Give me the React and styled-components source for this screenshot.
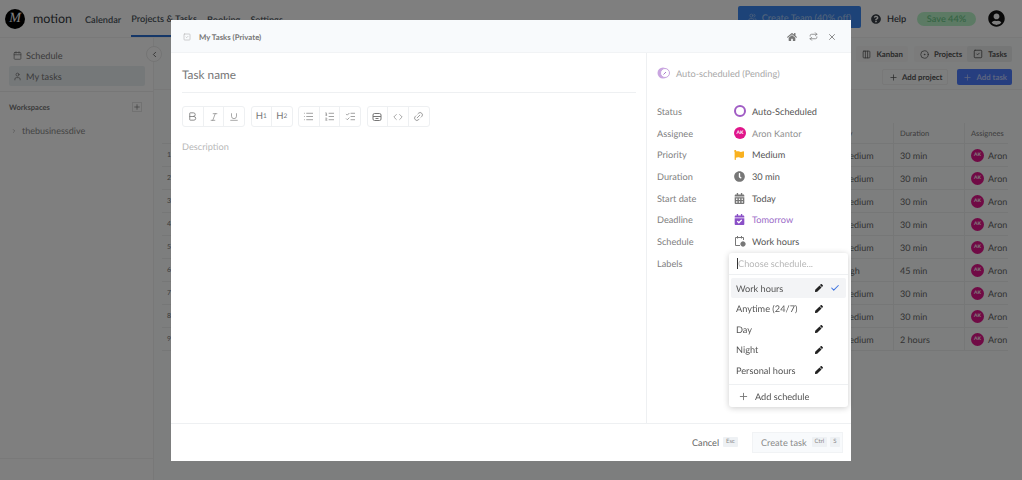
import React from 'react';
import styled, { createGlobalStyle } from 'styled-components';
import {
  Bold, Italic, Underline, List, ListOrdered, ListChecks, Code, Link2, Plus, X, Repeat, Check,
  Calendar, User, ChevronLeft, ChevronRight, Columns3, CircleDot, SquareCheck, Users,
} from 'lucide-react';
import { FaHome, FaPen, FaFlag, FaClock, FaQuestionCircle, FaUserCircle, FaCalendarAlt, FaCalendarCheck } from 'react-icons/fa';

const GlobalStyle = createGlobalStyle`
  html, body { margin: 0; padding: 0; height: 100%; background: #fff; overflow: hidden; }
  body {
    font-family: Lato, "Open Sans", "Liberation Sans", sans-serif;
    color: #444;
    text-rendering: geometricPrecision;
  }
  * { box-sizing: border-box; }
`;

/* page behind the dialog */
const Page = styled.div`
  width: 1022px;
  height: 480px;
  display: flex;
  flex-direction: column;
  background: #fff;
  overflow: hidden;
`;

const TopBar = styled.header`
  height: 38px;
  display: flex;
  align-items: center;
  padding: 0 17px 0 5px;
  border-bottom: 1px solid #f2f2f2;
  flex-shrink: 0;
`;

const Logo = styled.div`
  width: 20px;
  height: 20px;
  border-radius: 50%;
  background: #000;
  color: #fff;
  font: italic 14px/19px "Liberation Serif", serif;
  text-align: center;
`;

const Brand = styled.span`
  margin-left: 8px;
  font-size: 12.5px;
  color: #33383c;
  width: 52px;
`;

const Nav = styled.nav`
  display: flex;
  gap: 10px;
  font-size: 9.2px;
  font-weight: 600;
  color: #49525a;
  height: 100%;
`;

const NavItem = styled.span`
  display: flex;
  align-items: center;
  height: 100%;
  padding-top: 2px;
  border-bottom: ${p => (p.$active ? '2px solid #2a6fd0' : '0')};
`;

const TopRight = styled.div`
  margin-left: auto;
  display: flex;
  align-items: center;
`;

const TeamButton = styled.div`
  width: 123px;
  height: 22px;
  margin-top: -3px;
  border-radius: 2px;
  background: #3b86f0;
  color: #9fc4f5;
  font-size: 9.2px;
  font-weight: 600;
  display: flex;
  align-items: center;
  justify-content: center;
  gap: 5px;
`;

const HelpLink = styled.div`
  margin-left: 10px;
  width: 46px;
  display: flex;
  align-items: center;
  gap: 6px;
  font-size: 9.2px;
  font-weight: 600;
  color: #3a4148;
`;

const SavePill = styled.div`
  width: 59px;
  height: 14px;
  border-radius: 7px;
  background: #b8f5c8;
  color: #6fc88a;
  font-size: 9.2px;
  font-weight: 600;
  text-align: center;
  line-height: 14px;
`;

const Avatar = styled.div`
  margin-left: 12px;
  display: flex;
  color: #111;
`;

const Body = styled.div`
  flex: 1;
  display: flex;
  min-height: 0;
`;

const Sidebar = styled.aside`
  width: 154px;
  flex-shrink: 0;
  display: flex;
  flex-direction: column;
  border-right: 1px solid #f0f0f0;
`;

const SideNav = styled.div`
  padding: 7px 8px 6px 9px;
  border-bottom: 1px solid #eee;
  height: 54px;
`;

const SideItem = styled.div`
  height: 20px;
  margin-bottom: 1px;
  padding-left: 4px;
  display: flex;
  align-items: center;
  gap: 4px;
  font-size: 9.2px;
  color: #777;
  border-radius: 2px;
  background: ${p => (p.$active ? '#ebf0f3' : 'transparent')};
`;

const WorkspaceHead = styled.div`
  display: flex;
  justify-content: space-between;
  align-items: center;
  padding: 10px 11px 0 9px;
  font-size: 7.5px;
  font-weight: 700;
  color: #777;
`;

const AddBox = styled.span`
  width: 10px;
  height: 10px;
  border: 1px solid #e4e4e4;
  display: flex;
  align-items: center;
  justify-content: center;
`;

const WorkspaceRow = styled.div`
  margin-top: 13px;
  padding-left: 11px;
  display: flex;
  align-items: center;
  gap: 5px;
  font-size: 9px;
  color: #888;
`;

const SideFoot = styled.div`
  margin-top: auto;
  height: 22px;
  border-top: 1px solid #f2f2f2;
`;

const Main = styled.main`
  flex: 1;
  min-width: 0;
  position: relative;
  display: flex;
  flex-direction: column;
  background: #fbfdfd;
`;

const Collapse = styled.span`
  position: absolute;
  left: -8px;
  top: 8px;
  width: 16px;
  height: 16px;
  border-radius: 50%;
  background: #fff;
  border: 1px solid #e8e8e8;
  display: flex;
  align-items: center;
  justify-content: center;
`;

const MainHead = styled.div`
  height: 52px;
  padding: 8px 10px 0 10px;
  display: flex;
  flex-direction: column;
  border-bottom: 1px solid #f0f0f0;
  flex-shrink: 0;
`;

const HeadRow = styled.div`
  display: flex;
  align-items: center;
  justify-content: flex-end;
  height: 16px;
`;

const TabGroup = styled.div`
  display: flex;
  align-items: center;
  height: 16px;
  margin-left: 6px;
  background: #f6f7f7;
  border-radius: 2px;
`;

const ViewTab = styled.span`
  display: flex;
  align-items: center;
  gap: 5px;
  height: 16px;
  padding: 0 5px 0 6px;
  font-size: 7.8px;
  font-weight: 700;
  color: #555;
  border-radius: 2px;
  background: ${p => (p.$active ? '#eaecec' : 'transparent')};
`;

const ActionRow = styled(HeadRow)`
  margin-top: 7px;
  gap: 9px;
`;

const ActionButton = styled.span`
  height: 16px;
  padding: 0 5px 0 6px;
  display: flex;
  align-items: center;
  gap: 4px;
  border-radius: 2px;
  font-size: 7.8px;
  font-weight: 700;
  color: ${p => (p.$primary ? '#b9c9ff' : '#555')};
  background: ${p => (p.$primary ? '#4d7cff' : 'transparent')};
  border: ${p => (p.$primary ? '0' : '1px solid #f0f0f0')};
`;

const Table = styled.div`
  margin: 33px 14px 0 8px;
  display: flex;
  flex-direction: column;
`;

const TableRow = styled.div`
  display: grid;
  grid-template-columns: 1fr 68px 71px 44px;
  height: ${p => (p.$head ? 21 : 23)}px;
  align-items: center;
  border-bottom: 1px solid #eceeee;
  font-size: ${p => (p.$head ? 7.5 : 9)}px;
  color: ${p => (p.$head ? '#777' : '#666')};
`;

const RowIndex = styled.span`
  padding-left: 5px;
  font-size: 7px;
  color: #777;
`;

const Cell = styled.span`
  padding-left: ${p => (p.$line ? 6 : 3)}px;
  height: 100%;
  display: flex;
  align-items: center;
  gap: 4px;
  white-space: nowrap;
  overflow: hidden;
  border-left: ${p => (p.$line ? '1px solid #eceeee' : '0')};
`;

const Initials = styled.span`
  flex-shrink: 0;
  width: ${p => p.$size || 13}px;
  height: ${p => p.$size || 13}px;
  border-radius: 50%;
  background: #e0158a;
  color: #fff;
  font-size: 5px;
  font-weight: 700;
  display: flex;
  align-items: center;
  justify-content: center;
`;

const Overlay = styled.div`
  position: fixed;
  inset: 0;
  background: rgba(0, 0, 0, 0.5);
`;

/* dialog */
const Modal = styled.div`
  position: fixed;
  left: 171px;
  top: 20px;
  width: 680px;
  height: 441px;
  background: #fff;
  display: flex;
  flex-direction: column;
`;

const ModalHead = styled.div`
  height: 33px;
  flex-shrink: 0;
  display: flex;
  align-items: center;
  padding: 1px 14px 0 12px;
  background: #f8fafc;
  border-bottom: 1px solid #f1f3f5;
`;

const ModalTitle = styled.span`
  margin-left: 8px;
  font-size: 7.8px;
  font-weight: 700;
  color: #777;
`;

const HeadIcons = styled.div`
  margin-left: auto;
  display: flex;
  align-items: center;
  gap: 9px;
  color: #777;
`;

const HomeIcon = styled(FaHome)`
  margin-right: 3px;
`;

const ModalBody = styled.div`
  flex: 1;
  display: flex;
  min-height: 0;
`;

const Editor = styled.div`
  flex: 1;
  padding: 0 10px 0 11px;
  border-right: 1px solid #eef0f2;
`;

const TaskName = styled.div`
  height: 40px;
  display: flex;
  align-items: center;
  padding-top: 4px;
  font-size: 11.8px;
  color: #777;
  border-bottom: 1px solid #eef0f2;
`;

const Toolbar = styled.div`
  margin-top: 13px;
  display: flex;
  gap: 5.5px;
`;

const ToolGroup = styled.div`
  display: flex;
  width: ${p => p.$count * 21}px;
  height: 21px;
  border: 1px solid #eef0f2;
  border-radius: 3px;
`;

const ToolButton = styled.span`
  flex: 1;
  display: flex;
  align-items: center;
  justify-content: center;
  color: #777;
  font-size: 9.5px;
  border-left: 1px solid #eef0f2;
  &:first-child { border-left: 0; }
  sub { font-size: 6.5px; line-height: 0; vertical-align: baseline; }
`;

const Description = styled.div`
  margin-top: 14px;
  font-size: 9.2px;
  color: #b8b8b8;
`;

const Side = styled.div`
  width: 204px;
  flex-shrink: 0;
  padding: 13px 0 0 10px;
  position: relative;
`;

const AutoHead = styled.div`
  display: flex;
  align-items: center;
  gap: 5px;
  height: 14px;
  font-size: 9.2px;
  color: #a8a8a8;
  margin-bottom: 20.5px;
`;

const Field = styled.div`
  display: grid;
  grid-template-columns: 77px 18px 1fr;
  align-items: center;
  height: 21.7px;
  font-size: 9.2px;
  color: ${p => p.$color || '#555'};
  position: relative;
`;

const FieldLabel = styled.span`
  color: #7f7f7f;
`;

const FieldIcon = styled.span`
  display: flex;
  align-items: center;
  color: ${p => p.$color || '#777'};
`;

const Ring = styled.span`
  width: 12px;
  height: 12px;
  border-radius: 50%;
  border: 2px solid #a05cc4;
`;

const Dropdown = styled.div`
  position: absolute;
  left: 72px;
  top: 1px;
  width: 119px;
  height: 154px;
  background: #fff;
  border-radius: 3px;
  box-shadow: 0 1px 6px rgba(0, 0, 0, 0.2);
  z-index: 2;
  display: flex;
  flex-direction: column;
`;

const SearchBox = styled.div`
  height: 22px;
  flex-shrink: 0;
  padding-left: 8px;
  display: flex;
  align-items: center;
  font-size: 9.2px;
  color: #b8b8b8;
  border-bottom: 1px solid #eef0f2;
`;

const Caret = styled.span`
  width: 1px;
  height: 11px;
  background: #333;
`;

const OptionList = styled.div`
  flex: 1;
  padding: 3px 2px 0;
  border-bottom: 1px solid #eef0f2;
`;

const Option = styled.div`
  height: 20px;
  margin-bottom: 0.5px;
  display: grid;
  grid-template-columns: 79px 15px 1fr;
  align-items: center;
  padding-left: 5px;
  font-size: 9.2px;
  color: #555;
  border-radius: 2px;
  background: ${p => (p.$selected ? '#f3f4f6' : 'transparent')};
`;

const AddOption = styled.div`
  height: 22px;
  flex-shrink: 0;
  display: flex;
  align-items: center;
  gap: 6px;
  padding-left: 9px;
  font-size: 9.2px;
  color: #555;
`;

const ModalFoot = styled.div`
  height: 38px;
  flex-shrink: 0;
  border-top: 1px solid #eef0f2;
  display: flex;
  align-items: center;
  justify-content: flex-end;
  padding: 0 8px 1px 0;
  font-size: 9.2px;
  color: #666;
  white-space: nowrap;
`;

const Kbd = styled.span`
  margin-left: ${p => p.$gap || 3}px;
  padding: 0 3px;
  height: 10px;
  line-height: 10px;
  font-size: 6px;
  color: #8a8a8a;
  background: #eef1f4;
  border-radius: 1px;
`;

const CreateButton = styled.div`
  margin-left: 14px;
  width: 91px;
  height: 21px;
  display: flex;
  align-items: center;
  padding-left: 8px;
  background: #f8fafc;
  border: 1px solid #f1f3f5;
  color: #8a8a8a;
`;

const rows = [
  ['Medium', '30 min'], ['Medium', '30 min'], ['Medium', '30 min'], ['Medium', '30 min'], ['Medium', '30 min'],
  ['High', '45 min'], ['Medium', '30 min'], ['Medium', '30 min'], ['Medium', '2 hours'],
];

const schedules = ['Work hours', 'Anytime (24/7)', 'Day', 'Night', 'Personal hours'];

const BackgroundPage = () => (
  <Page>
    <TopBar>
      <Logo>M</Logo>
      <Brand>motion</Brand>
      <Nav>
        <NavItem>Calendar</NavItem>
        <NavItem $active>Projects &amp; Tasks</NavItem>
        <NavItem>Booking</NavItem>
        <NavItem>Settings</NavItem>
      </Nav>
      <TopRight>
        <TeamButton><Users size={9} />Create Team (40% off)</TeamButton>
        <HelpLink><FaQuestionCircle size={10} />Help</HelpLink>
        <SavePill>Save 44%</SavePill>
        <Avatar><FaUserCircle size={17} /></Avatar>
      </TopRight>
    </TopBar>
    <Body>
      <Sidebar>
        <SideNav>
          <SideItem><Calendar size={9} />Schedule</SideItem>
          <SideItem $active><User size={9} />My tasks</SideItem>
        </SideNav>
        <WorkspaceHead>Workspaces<AddBox><Plus size={8} /></AddBox></WorkspaceHead>
        <WorkspaceRow><ChevronRight size={6} />thebusinessdive</WorkspaceRow>
        <SideFoot />
      </Sidebar>
      <Main>
        <Collapse><ChevronLeft size={9} /></Collapse>
        <MainHead>
          <HeadRow>
            <TabGroup><ViewTab><Columns3 size={9} />Kanban</ViewTab></TabGroup>
            <TabGroup>
              <ViewTab><CircleDot size={9} />Projects</ViewTab>
              <ViewTab $active><SquareCheck size={10} />Tasks</ViewTab>
            </TabGroup>
          </HeadRow>
          <ActionRow>
            <ActionButton><Plus size={9} />Add project</ActionButton>
            <ActionButton $primary><Plus size={9} />Add task</ActionButton>
          </ActionRow>
        </MainHead>
        <Table>
          <TableRow $head>
            <span />
            <Cell>Priority</Cell>
            <Cell $line>Duration</Cell>
            <Cell $line>Assignees</Cell>
          </TableRow>
          {rows.map(([priority, duration], i) => (
            <TableRow key={i}>
              <RowIndex>{i + 1}</RowIndex>
              <Cell><FaFlag size={9} />{priority}</Cell>
              <Cell $line>{duration}</Cell>
              <Cell $line><Initials>AK</Initials>Aron Kantor</Cell>
            </TableRow>
          ))}
        </Table>
      </Main>
    </Body>
  </Page>
);

export default function App() {
  return (
    <>
      <GlobalStyle />
      <BackgroundPage />
      <Overlay />
      <Modal>
        <ModalHead>
          <SquareCheck size={8} color="#b8b8b8" />
          <ModalTitle>My Tasks (Private)</ModalTitle>
          <HeadIcons>
            <HomeIcon size={10} />
            <Repeat size={9} />
            <X size={10} />
          </HeadIcons>
        </ModalHead>
        <ModalBody>
          <Editor>
            <TaskName>Task name</TaskName>
            <Toolbar>
              <ToolGroup $count={3}>
                <ToolButton><Bold size={11} strokeWidth={1.8} /></ToolButton>
                <ToolButton><Italic size={10} strokeWidth={1.5} /></ToolButton>
                <ToolButton><Underline size={10} strokeWidth={1.5} /></ToolButton>
              </ToolGroup>
              <ToolGroup $count={2}>
                <ToolButton>H<sub>1</sub></ToolButton>
                <ToolButton>H<sub>2</sub></ToolButton>
              </ToolGroup>
              <ToolGroup $count={3}>
                <ToolButton><List size={11} strokeWidth={1.5} /></ToolButton>
                <ToolButton><ListOrdered size={11} strokeWidth={1.5} /></ToolButton>
                <ToolButton><ListChecks size={11} strokeWidth={1.5} /></ToolButton>
              </ToolGroup>
              <ToolGroup $count={3}>
                <ToolButton>
                  <svg width="10" height="10" viewBox="0 0 10 10" fill="none" stroke="currentColor">
                    <rect x="1" y="1.5" width="8" height="7" rx="1.5" />
                    <path d="M1 4.5h8M3.5 6.5h3" />
                  </svg>
                </ToolButton>
                <ToolButton><Code size={10} strokeWidth={1.5} /></ToolButton>
                <ToolButton><Link2 size={11} strokeWidth={1.5} style={{ transform: 'rotate(-45deg)' }} /></ToolButton>
              </ToolGroup>
            </Toolbar>
            <Description>Description</Description>
          </Editor>
          <Side>
            <AutoHead>
              <svg width="14" height="12" viewBox="0 0 14 12">
                <circle cx="6" cy="6" r="5.5" fill="#c9a5e0" />
                <circle cx="8" cy="6" r="4.5" fill="#fff" stroke="#c9a5e0" />
                <path d="M6.5 7.5 9 5" stroke="#a878cc" strokeWidth="1" />
              </svg>
              Auto-scheduled (Pending)
            </AutoHead>
            <Field>
              <FieldLabel>Status</FieldLabel>
              <FieldIcon><Ring /></FieldIcon>
              <span>Auto-Scheduled</span>
            </Field>
            <Field $color="#8f8f8f">
              <FieldLabel>Assignee</FieldLabel>
              <FieldIcon><Initials $size={12}>AK</Initials></FieldIcon>
              <span>Aron Kantor</span>
            </Field>
            <Field>
              <FieldLabel>Priority</FieldLabel>
              <FieldIcon $color="#f9b11f"><FaFlag size={10} /></FieldIcon>
              <span>Medium</span>
            </Field>
            <Field>
              <FieldLabel>Duration</FieldLabel>
              <FieldIcon><FaClock size={11} /></FieldIcon>
              <span>30 min</span>
            </Field>
            <Field>
              <FieldLabel>Start date</FieldLabel>
              <FieldIcon><FaCalendarAlt size={11} /></FieldIcon>
              <span>Today</span>
            </Field>
            <Field $color="#9c6cc8">
              <FieldLabel>Deadline</FieldLabel>
              <FieldIcon $color="#8a4fc7"><FaCalendarCheck size={11} /></FieldIcon>
              <span>Tomorrow</span>
            </Field>
            <Field>
              <FieldLabel>Schedule</FieldLabel>
              <FieldIcon>
                <svg width="12" height="12" viewBox="0 0 12 12" fill="none" stroke="currentColor">
                  <path d="M6 10.5H1.5v-8h8V5M3.5 1v2.5M7.5 1v2.5" />
                  <circle cx="9" cy="9" r="2.2" fill="currentColor" />
                </svg>
              </FieldIcon>
              <span>Work hours</span>
            </Field>
            <Field>
              <FieldLabel>Labels</FieldLabel>
              <Dropdown>
                <SearchBox><Caret />Choose schedule...</SearchBox>
                <OptionList>
                  {schedules.map((name, i) => (
                    <Option key={name} $selected={i === 0}>
                      <span>{name}</span>
                      <FaPen size={8} color="#222" />
                      {i === 0 && <Check size={10} strokeWidth={2.5} color="#3f74e0" />}
                    </Option>
                  ))}
                </OptionList>
                <AddOption><Plus size={11} color="#777" />Add schedule</AddOption>
              </Dropdown>
            </Field>
          </Side>
        </ModalBody>
        <ModalFoot>
          Cancel<Kbd $gap={4}>Esc</Kbd>
          <CreateButton>Create task<Kbd $gap={5}>Ctrl</Kbd><Kbd>S</Kbd></CreateButton>
        </ModalFoot>
      </Modal>
    </>
  );
}
